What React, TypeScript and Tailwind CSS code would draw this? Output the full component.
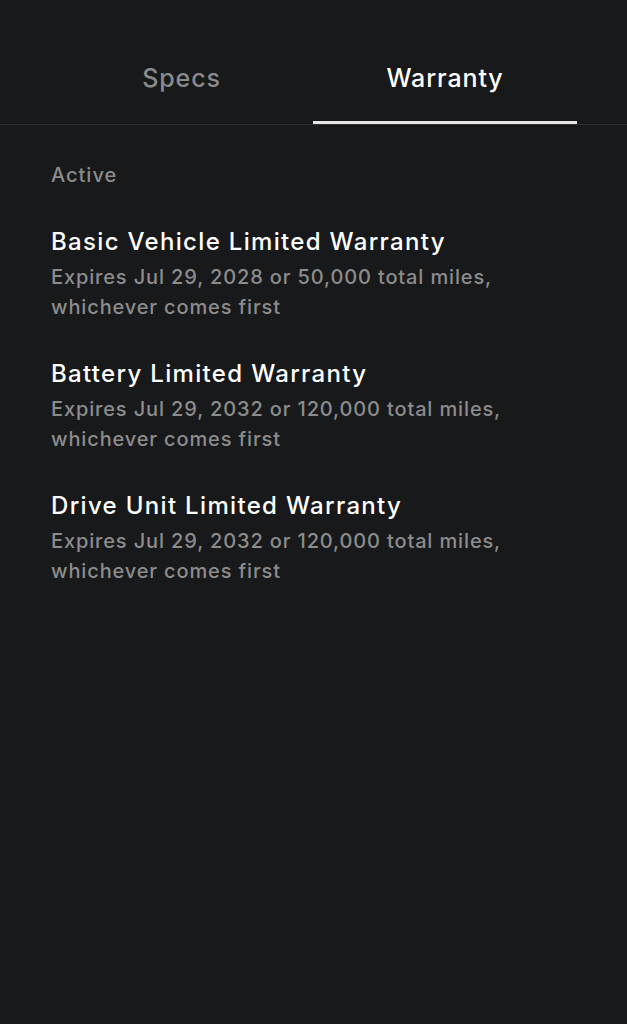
const warranties = [
  {
    title: "Basic Vehicle Limited Warranty",
    detail: "Expires Jul 29, 2028 or 50,000 total miles, whichever comes first",
  },
  {
    title: "Battery Limited Warranty",
    detail: "Expires Jul 29, 2032 or 120,000 total miles, whichever comes first",
  },
  {
    title: "Drive Unit Limited Warranty",
    detail: "Expires Jul 29, 2032 or 120,000 total miles, whichever comes first",
  },
]

export default function App() {
  return (
    <div
      className="min-h-screen w-full bg-[#18191b] text-[#f2f2f2]"
      style={{ fontFamily: "Inter, 'Liberation Sans', sans-serif" }}
    >
      {/* Tabs */}
      <div className="h-[125px] border-b border-[#2e2f31] px-[50px] grid grid-cols-[263px_264px]">
        <button className="flex flex-col items-center">
          <span className="flex-1 flex items-center pt-[36px] text-[25px] tracking-[0.035em] font-medium text-[#8a8a8a]">
            Specs
          </span>
          <span className="h-[3px] w-full" />
        </button>
        <button className="flex flex-col items-center">
          <span className="flex-1 flex items-center pt-[36px] text-[25px] tracking-[0.035em] font-medium text-white">
            Warranty
          </span>
          <span className="h-[3px] w-full bg-[#e6e6e6]" />
        </button>
      </div>

      {/* Content */}
      <div className="px-[51px] pt-[38px]">
        <div className="text-[20px] leading-[24px] tracking-[0.05em] font-medium text-[#8c8c8c]">Active</div>
        <div className="mt-[39px] flex flex-col gap-[36px]">
          {warranties.map((w) => (
            <div key={w.title}>
              <div className="text-[24px] leading-[32px] tracking-[0.055em] font-medium text-white">{w.title}</div>
              <div className="mt-[4px] max-w-[480px] text-[20px] leading-[30px] tracking-[0.043em] font-medium text-[#8c8c8c]">
                {w.detail}
              </div>
            </div>
          ))}
        </div>
      </div>
    </div>
  )
}
